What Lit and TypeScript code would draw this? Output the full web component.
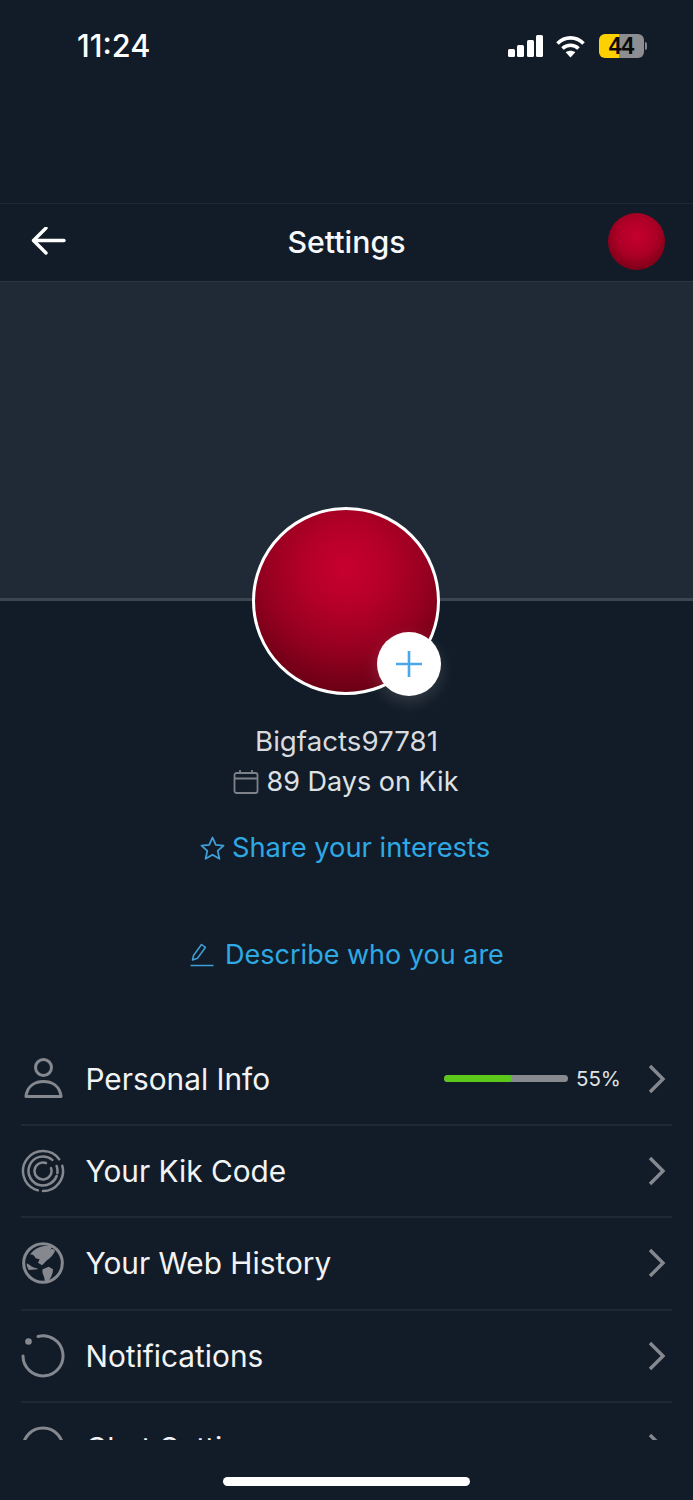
import { LitElement, html, css, svg } from "lit";
import { customElement } from "lit/decorators.js";

/** Circular arc path around (22,22); angles in degrees, 0 = east, clockwise. */
const arc = (r: number, from: number, to: number) => {
  const p = (a: number) => {
    const t = (a * Math.PI) / 180;
    return `${(22 + r * Math.cos(t)).toFixed(2)} ${(22 + r * Math.sin(t)).toFixed(2)}`;
  };
  const large = Math.abs(to - from) > 180 ? 1 : 0;
  return `M${p(from)}A${r} ${r} 0 ${large} ${to > from ? 1 : 0} ${p(to)}`;
};

const codePath = [
  arc(20, -36, -246),
  arc(20, 114, 105),
  arc(20, 90, -15),
  arc(14.5, -50, -265),
  arc(14.5, 98, 20),
  arc(14.5, 8, -20),
  arc(8.5, -70, -380),
].join("");

const icons = {
  person: svg`<svg width="44" height="44" viewBox="0 0 44 44" fill="none" stroke="#85898f" stroke-width="3"><circle cx="22.5" cy="10.5" r="8"/><path d="M5 39.5c0-1 .2-2 .5-3C7.5 29 14 24.5 22.5 24.5S37.5 29 39.5 36.5c.3 1 .5 2 .5 3z" stroke-linejoin="round"/></svg>`,
  code: svg`<svg width="44" height="44" viewBox="0 0 44 44" fill="none" stroke="#85898f" stroke-width="2.5" stroke-linecap="round"><path d=${codePath}/></svg>`,
  globe: svg`<svg width="44" height="44" viewBox="7 7 132 132"><circle cx="73" cy="73" r="58" fill="#121c28" stroke="#85898f" stroke-width="9"/><path d="M34 48C48 28 74 16 102 24L92 36c4-5 13-8 17 2-6 12-14 20-24 27L70 80 58 72l5-10-12-3C47 50 42 46 34 48z" fill="#85898f"/><path d="M72 92l18-8 13 8c0 14-8 30-19 41l-6-8c0-13-10-20-6-33z" fill="#85898f"/><path d="M24 74c6 2 12 8 19 12 7 2 14 3 15 6l-28 2c-4-6-6-13-6-20z" fill="#85898f"/></svg>`,
  bell: svg`<svg width="44" height="44" viewBox="0 0 44 44" fill="none" stroke="#85898f" stroke-width="3" stroke-linecap="round"><path d="M17 2.500A20 20 0 1 1 2 22"/><circle cx="7.500" cy="7.500" r="3.300" fill="#85898f" stroke="none"/></svg>`,
  chat: svg`<svg width="44" height="44" viewBox="0 0 44 44" fill="none" stroke="#85898f" stroke-width="3"><circle cx="22" cy="22" r="20"/></svg>`,
};

const rows = [
  { icon: icons.person, label: "Personal Info", progress: true },
  { icon: icons.code, label: "Your Kik Code" },
  { icon: icons.globe, label: "Your Web History" },
  { icon: icons.bell, label: "Notifications" },
  { icon: icons.chat, label: "Chat Settings" },
];

@customElement("app-root")
export class AppRoot extends LitElement {
  static styles = css`
    :host {
      display: block;
      width: 693px;
      height: 1500px;
      overflow: hidden;
      background: #121c28;
      font-family: Inter, "Liberation Sans", sans-serif;
      color: #f1f3f5;
    }
    .status {
      height: 203px;
      box-sizing: border-box;
      padding: 27px 46px 0 77px;
      display: flex;
      justify-content: space-between;
      align-items: flex-start;
    }
    .time { font-size: 30.7px; font-weight: 500; line-height: 38px; color: #fff; }
    .sys { display: flex; align-items: center; gap: 13px; height: 38px; }
    .sig { display: flex; align-items: flex-end; gap: 2.6px; height: 22px; }
    .sig i { display: block; width: 6.8px; background: #fff; border-radius: 1.5px; }
    .wifi { margin-left: -1px; margin-right: 0; }
    .batt { display: flex; align-items: center; gap: 1px; }
    .cell {
      width: 45px; height: 24px; border-radius: 6px; overflow: hidden;
      background: linear-gradient(90deg, #fdd000 0 44%, #8c8e92 44%);
      color: #0a0a0a; font-size: 23px; font-weight: 700; line-height: 24px; text-align: center;
      font-family: "Liberation Sans", sans-serif;
    }
    .nub { width: 2px; height: 8px; background: #85888c; border-radius: 0 2px 2px 0; }
    .header {
      height: 79px; box-sizing: border-box;
      display: grid; grid-template-columns: 1fr auto 1fr; align-items: center;
      padding: 0 28px 2px 31px;
      border-top: 1px solid #1d2833;
      border-bottom: 1px solid #2a3541;
    }
    .back { display: block; }
    .title { font-size: 30.3px; font-weight: 500; color: #f7f8f9; margin-right: 3px; }
    .mini {
      justify-self: end; width: 57px; height: 57px; border-radius: 50%;
      background: radial-gradient(circle at 50% 40%, #c6002e 0, #ac0026 45%, #7e0019 75%, #4d0d14 100%);
    }
    .hero { height: 316px; background: #1f2a36; border-bottom: 3px solid #3b4651; }
    .profile {
      display: flex; flex-direction: column; align-items: center;
      height: 525px; margin-top: -94px;
      position: relative;
    }
    .avatar-wrap { position: relative; width: 188px; height: 188px; margin-right: 1px; }
    .avatar {
      width: 188px; height: 188px; box-sizing: border-box; border-radius: 50%;
      border: 3px solid #fff;
      background: radial-gradient(circle at 50% 32%, #c8002f 0, #b30028 28%, #930020 55%, #680014 82%, #4e000f 100%);
    }
    .plus {
      position: absolute; right: -1px; bottom: -1px; width: 64px; height: 64px; border-radius: 50%;
      background: #fff; display: flex; align-items: center; justify-content: center;
      box-shadow: 0 6px 16px rgba(255,255,255,.14);
    }
    .plus svg { margin-top: -1px; }
    .name { margin-top: 26px; font-size: 27.7px; line-height: 40px; color: #d8dbdf; }
    .days { display: flex; align-items: center; gap: 8px; font-size: 27px; line-height: 42px; color: #dfe2e5; margin-right: 2px; }
    .link { display: flex; align-items: center; color: #2ea9e4; line-height: 40px; }
    .interests { margin-top: 25px; gap: 7px; font-size: 27.3px; margin-right: 3px; }
    .describe { margin-top: 67px; gap: 11px; font-size: 27px; margin-left: 1px; }
    .list { height: 406.5px; padding-left: 21px; padding-right: 21px; overflow: hidden; margin-top: 1.5px; }
    .row {
      height: 92.4px; box-sizing: border-box;
      display: flex; align-items: center;
      border-bottom: 2px solid #1e2935;
    }
    .row > svg { flex: none; }
    .label { margin-left: 20.5px; flex: 1; font-size: 29.8px; font-weight: 400; color: #f1f3f5; }
    .bar { width: 124px; height: 7px; border-radius: 4px; overflow: hidden; background: #878b8f; }
    .bar i { display: block; height: 100%; background: #5cc81a; border-radius: 4px; }
    .pct { margin-left: 8px; margin-right: 27px; font-size: 20.5px; color: #dfe2e5; }
    .chev { margin-right: 6px; }
    .home { display: flex; justify-content: center; margin-top: 37px; }
    .home i { display: block; width: 247px; height: 9px; border-radius: 5px; background: #fff; }
  `;

  render() {
    return html`
      <div class="status">
        <div class="time">11:24</div>
        <div class="sys">
          <div class="sig"><i style="height:8px"></i><i style="height:12px"></i><i style="height:17px"></i><i style="height:22px"></i></div>
          <svg class="wifi" width="31" height="23" viewBox="0 0 30 23" fill="none" stroke="#fff" stroke-width="3.6"><path d="M2 8.500C9.500 1 20.500 1 28 8.500"/><path d="M7 13.500c4.500-4.300 11.500-4.300 16 0"/><path d="M15 22.500l-4.800-5.200c2.800-2 6.800-2 9.600 0z" fill="#fff" stroke="none"/></svg>
          <div class="batt"><div class="cell">44</div><div class="nub"></div></div>
        </div>
      </div>
      <div class="header">
        <svg class="back" width="36" height="30" viewBox="0 1 36 30" fill="none" stroke="#fff" stroke-width="3.4" stroke-linecap="round" stroke-linejoin="round"><path d="M33 14.500H3"/><path d="M15 2L2.500 14.500 15 27"/></svg>
        <div class="title">Settings</div>
        <div class="mini"></div>
      </div>
      <div class="hero"></div>
      <div class="profile">
        <div class="avatar-wrap">
          <div class="avatar"></div>
          <div class="plus"><svg width="28" height="28" viewBox="0 0 28 28" stroke="#4ba7e8" stroke-width="2.6"><path d="M14 1v26M1 14h26"/></svg></div>
        </div>
        <div class="name">Bigfacts97781</div>
        <div class="days">
          <svg width="26" height="26" viewBox="0 0 26 26" fill="none" stroke="#7e8288" stroke-width="1.8"><rect x="1.500" y="4" width="23" height="20" rx="2"/><path d="M1.500 9.500h23M7 1v3M19 1v3"/></svg>
          <span>89 Days on Kik</span>
        </div>
        <div class="link interests">
          <svg width="25" height="25" viewBox="0 0 25 25" fill="none" stroke="#3f9fd8" stroke-width="1.8" stroke-linejoin="round"><path d="M12.500 1.500l3.300 7.300 7.700.8-5.800 5.300 1.700 7.900-6.900-4.100-6.900 4.100 1.700-7.900-5.800-5.300 7.700-.8z"/></svg>
          <span>Share your interests</span>
        </div>
        <div class="link describe">
          <svg width="24" height="24" viewBox="0 0 24 24" fill="none" stroke="#3f9fd8" stroke-width="1.5" stroke-linejoin="round"><path d="M0.500 22.500h23"/><path d="M2.500 17l1-4.500L11.500 1.500l4 2.800-8 11z"/></svg>
          <span>Describe who you are</span>
        </div>
      </div>
      <div class="list">
        ${rows.map(
          (r) => html`<div class="row">
            ${r.icon}
            <div class="label">${r.label}</div>
            ${r.progress
              ? html`<div class="bar"><i style="width:55%"></i></div><div class="pct">55%</div>`
              : ""}
            <svg class="chev" width="18" height="30" viewBox="0 0 18 30" fill="none" stroke="#85898f" stroke-width="3.4"><path d="M2 2l13 13L2 28"/></svg>
          </div>`
        )}
      </div>
      <div class="home"><i></i></div>
    `;
  }
}
